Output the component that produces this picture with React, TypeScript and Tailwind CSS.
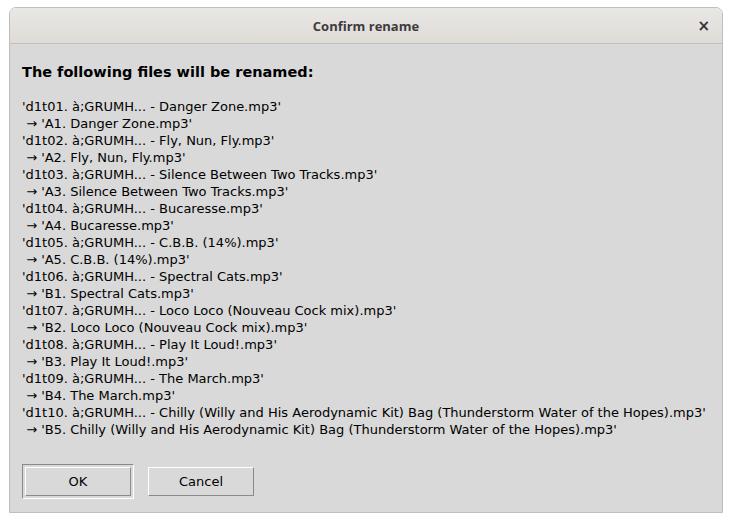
const lines: [string, string][] = [
  ["'d1t01. à;GRUMH... - Danger Zone.mp3'", "'A1. Danger Zone.mp3'"],
  ["'d1t02. à;GRUMH... - Fly, Nun, Fly.mp3'", "'A2. Fly, Nun, Fly.mp3'"],
  ["'d1t03. à;GRUMH... - Silence Between Two Tracks.mp3'", "'A3. Silence Between Two Tracks.mp3'"],
  ["'d1t04. à;GRUMH... - Bucaresse.mp3'", "'A4. Bucaresse.mp3'"],
  ["'d1t05. à;GRUMH... - C.B.B. (14%).mp3'", "'A5. C.B.B. (14%).mp3'"],
  ["'d1t06. à;GRUMH... - Spectral Cats.mp3'", "'B1. Spectral Cats.mp3'"],
  ["'d1t07. à;GRUMH... - Loco Loco (Nouveau Cock mix).mp3'", "'B2. Loco Loco (Nouveau Cock mix).mp3'"],
  ["'d1t08. à;GRUMH... - Play It Loud!.mp3'", "'B3. Play It Loud!.mp3'"],
  ["'d1t09. à;GRUMH... - The March.mp3'", "'B4. The March.mp3'"],
  [
    "'d1t10. à;GRUMH... - Chilly (Willy and His Aerodynamic Kit) Bag (Thunderstorm Water of the Hopes).mp3'",
    "'B5. Chilly (Willy and His Aerodynamic Kit) Bag (Thunderstorm Water of the Hopes).mp3'",
  ],
];

export default function App() {
  return (
    <div className="w-[732px] h-[522px] bg-white pt-[7px] pl-[9px] font-['DejaVu_Sans',sans-serif]">
      <div className="w-[714px] h-[506px] flex flex-col border border-[#bdbdbd] rounded-t-[7px] overflow-hidden">
        {/* Title bar */}
        <div className="h-[36px] shrink-0 flex items-center relative bg-gradient-to-b from-[#e9e7e4] to-[#dfdcd8] border-b border-[#c4bfba]">
          <span className="w-full text-center text-[13px] font-bold text-[#3c3c3c] font-['Open_Sans',sans-serif] pt-[3px]">
            Confirm rename
          </span>
          <span className="absolute right-[12px] top-[7px] text-[15px] font-bold text-[#333]">×</span>
        </div>

        {/* Body */}
        <div className="flex-1 bg-[#d9d9d9] px-[12px] pt-[20px] flex flex-col">
          <p className="text-[14.5px] font-bold text-black leading-[17px]">The following files will be renamed:</p>
          <div className="mt-[17px] text-[13px] leading-[17px] text-black whitespace-pre">
            {lines.map(([from, to], i) => (
              <div key={i}>
                <div>{from}</div>
                <div>{' → ' + to}</div>
              </div>
            ))}
          </div>

          <div className="mt-[26px] flex gap-[14px] text-[13px] text-black">
            <div className="border border-t-[#8a8a8a] border-l-[#8a8a8a] border-r-white border-b-white p-[2px]">
              <button className="w-[106px] h-[29px] bg-[#d9d9d9] border border-t-white border-l-white border-r-[#8a8a8a] border-b-[#8a8a8a]">
                OK
              </button>
            </div>
            <div className="pt-[3px]">
              <button className="w-[106px] h-[29px] bg-[#d9d9d9] border border-t-white border-l-white border-r-[#8a8a8a] border-b-[#8a8a8a]">
                Cancel
              </button>
            </div>
          </div>
        </div>
      </div>
    </div>
  );
}
